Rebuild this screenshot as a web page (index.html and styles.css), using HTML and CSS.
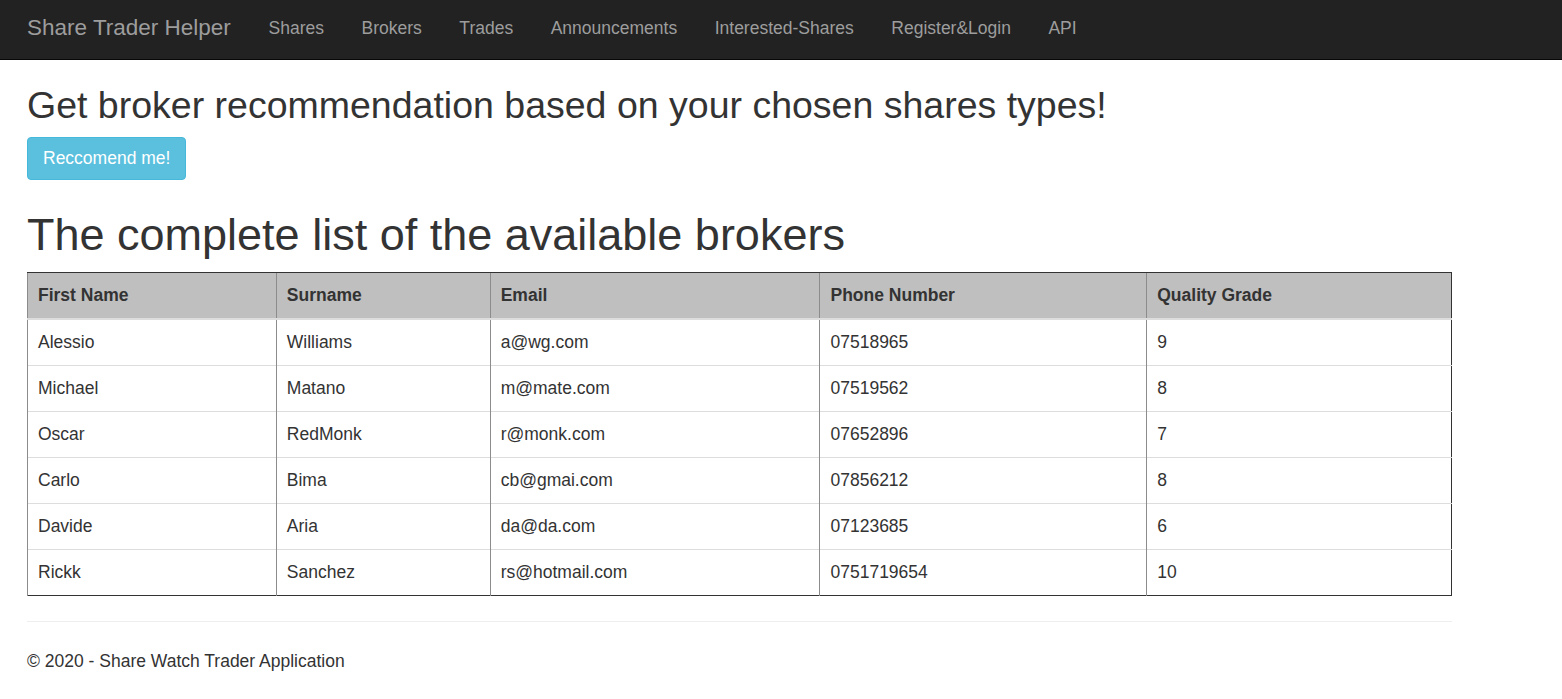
FILE: index.html
```html
<!DOCTYPE html>
<html>
<head>
<meta charset="utf-8">
<title>Brokers - Share Trader Helper</title>
<link rel="stylesheet" href="styles.css">
</head>
<body>
<nav class="navbar">
  <a class="brand" href="#">Share Trader Helper</a>
  <ul class="nav">
    <li><a href="#">Shares</a></li>
    <li><a href="#">Brokers</a></li>
    <li><a href="#">Trades</a></li>
    <li><a href="#">Announcements</a></li>
    <li><a href="#">Interested-Shares</a></li>
    <li><a href="#">Register&amp;Login</a></li>
    <li><a href="#">API</a></li>
  </ul>
</nav>
<main class="content">
  <h3 class="subtitle">Get broker recommendation based on your chosen shares types!</h3>
  <button class="btn-info">Reccomend me!</button>
  <h1 class="title">The complete list of the available brokers</h1>
  <table class="brokers">
    <thead>
      <tr><th class="c1">First Name</th><th class="c2">Surname</th><th class="c3">Email</th><th class="c4">Phone Number</th><th class="c5">Quality Grade</th></tr>
    </thead>
    <tbody>
      <tr><td>Alessio</td><td>Williams</td><td>a@wg.com</td><td>07518965</td><td>9</td></tr>
      <tr><td>Michael</td><td>Matano</td><td>m@mate.com</td><td>07519562</td><td>8</td></tr>
      <tr><td>Oscar</td><td>RedMonk</td><td>r@monk.com</td><td>07652896</td><td>7</td></tr>
      <tr><td>Carlo</td><td>Bima</td><td>cb@gmai.com</td><td>07856212</td><td>8</td></tr>
      <tr><td>Davide</td><td>Aria</td><td>da@da.com</td><td>07123685</td><td>6</td></tr>
      <tr><td>Rickk</td><td>Sanchez</td><td>rs@hotmail.com</td><td>0751719654</td><td>10</td></tr>
    </tbody>
  </table>
  <hr class="sep">
  <footer class="footer">© 2020 - Share Watch Trader Application</footer>
</main>
</body>
</html>
```

FILE: styles.css
```css
* { box-sizing: border-box; }
html, body { margin: 0; padding: 0; background: #fff; }
body {
  font-family: "Liberation Sans", Arial, Helvetica, sans-serif;
  font-size: 17.5px;
  line-height: 1.42857;
  color: #333;
}
.navbar {
  display: flex;
  align-items: center;
  height: 60px;
  background: #222;
  border-bottom: 1px solid #080808;
  padding-left: 27px;
  padding-bottom: 2px;
}
.brand {
  font-size: 22.5px;
  color: #9d9d9d;
  text-decoration: none;
  padding-right: 19px;
  line-height: 1;
}
.nav {
  display: flex;
  list-style: none;
  margin: 0;
  padding: 0;
}
.nav a {
  display: block;
  padding: 0 18.75px;
  color: #9d9d9d;
  text-decoration: none;
  font-size: 17.5px;
  line-height: 1;
}
.content {
  width: 1479px;
  padding: 0 27px;
}
.subtitle {
  font-size: 37.5px;
  font-weight: 400;
  line-height: 1.1;
  margin: 25px 0 11px;
}
.btn-info {
  display: inline-block;
  font-family: inherit;
  font-size: 17.5px;
  line-height: 1.42857;
  color: #fff;
  background: #5bc0de;
  border: 1px solid #46b8da;
  border-radius: 4px;
  padding: 8px 15px;
  cursor: pointer;
}
.title {
  font-size: 45px;
  font-weight: 400;
  line-height: 1.1;
  margin: 30px 0 12px;
}
.brokers {
  width: 1425px;
  border-collapse: collapse;
  border: 1px solid #333;
}
.brokers th, .brokers td {
  text-align: left;
  padding: 10px 10px;
  line-height: 25px;
  vertical-align: top;
  border-left: 1px solid #8c8c8c;
  border-top: 1px solid #ddd;
}
.brokers th {
  background: #bfbfbf;
  font-weight: 700;
  border-bottom: 2px solid #ddd;
  border-top: 1px solid #333;
}
.c1 { width: 249px; }
.c2 { width: 214px; }
.c3 { width: 330px; }
.c4 { width: 327px; }
.c5 { width: 305px; }
.sep {
  width: 1425px;
  margin: 25px 0 0;
  border: 0;
  border-top: 1px solid #eee;
}
.footer {
  padding-top: 27px;
  font-size: 17.5px;
}
```
